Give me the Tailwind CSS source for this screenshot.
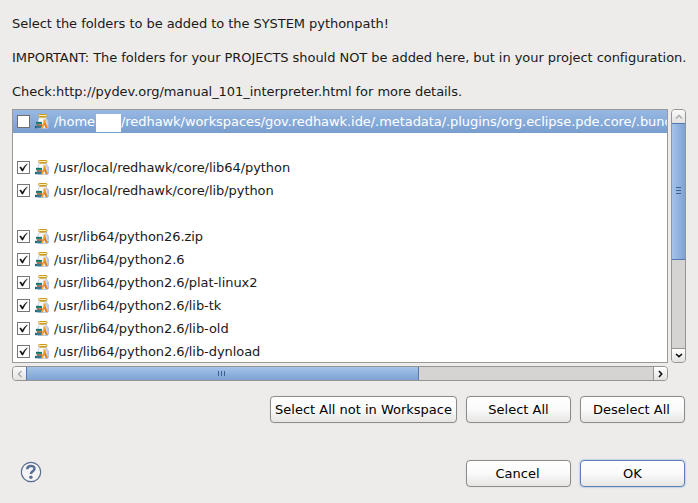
<!DOCTYPE html>
<html lang="en">
<head>
<meta charset="utf-8">
<title>Selection needed</title>
<script src="https://cdn.jsdelivr.net/npm/@tailwindcss/browser@4"></script>
</head>
<body class="w-[698px] h-[503px] overflow-hidden bg-[#edeceb] font-['DejaVu_Sans',sans-serif] text-[13px] leading-[17px] text-[#1a1a1a]">
<svg width="0" height="0" class="absolute">
  <defs>
    <linearGradient id="glass" x1="0" x2="1"><stop offset="0" stop-color="#ffffff"/><stop offset=".6" stop-color="#eef4fb"/><stop offset="1" stop-color="#a9c0e0"/></linearGradient>
    <symbol id="jar" viewBox="0 0 14 15">
      <path d="M4.500 3h7v1.700L13.500 7v6.500l-1 1H3V7z" fill="url(#glass)" stroke="#a3b9da" stroke-width=".7"/>
      <rect x="3.500" y=".5" width="8.500" height="2" rx=".8" fill="#fbeebc" stroke="#cc9c22" stroke-width="1"/>
      <path d="M5 3.600h5.500" stroke="#d9b04a" stroke-width=".9"/>
      <path d="M1 8h6v2.300H1z" fill="#1f8a72"/><path d="M1 8.300h5.500" stroke="#155e6c" stroke-width=".7"/>
      <path d="M2 10.300h5.500v1.500H2z" fill="#b9512f"/>
      <path d="M0 11.800h7v2.400H0z" fill="#1d6080"/><path d="M1.500 13h5" stroke="#6fae9f" stroke-width=".7"/>
      <path d="M8.500 5.500h2l.3 2.500-3 6.300H5.800L8.300 8.500z" fill="#f2a02c"/>
      <path d="M10.300 8l2.500 6h-2L9 10.500z" fill="#dd7d1c"/>
    </symbol>
    <symbol id="box" viewBox="0 0 13 13"><rect x=".5" y=".5" width="12" height="12" fill="#fff" stroke="#6f6e6c"/></symbol>
    <symbol id="checked" viewBox="0 0 13 13"><rect x=".5" y=".5" width="12" height="12" fill="#fff" stroke="#777674"/><path d="M2.500 6.200L4 5.700l1.400 2.300Q7.300 4.500 10.200 2.700l.3.400Q7.800 6 5.900 10.200H5z" fill="#111" stroke="#111" stroke-width=".2"/></symbol>
  </defs>
</svg>
<main class="flex h-full flex-col pl-3 pr-3">
  <div class="flex h-[109px] flex-col gap-[17px] pt-[15px] whitespace-nowrap tracking-[-0.05px]">
    <p>Select the folders to be added to the SYSTEM pythonpath!</p>
    <p>IMPORTANT: The folders for your PROJECTS should NOT be added here, but in your project configuration.</p>
    <p>Check:http://pydev.org/manual_101_interpreter.html for more details.</p>
  </div>
  <div class="flex h-[254px] shrink-0 gap-[3px]">
    <div class="h-[254px] w-[656px] overflow-hidden border border-[#9b9996] bg-white whitespace-nowrap tracking-[-0.06px]">
      <div class="flex h-[23px] items-center bg-linear-to-b from-[#98b8e3] to-[#789ecf] pl-1 text-white">
        <svg class="size-[13px] shrink-0"><use href="#box"/></svg><svg class="ml-[5px] h-[15px] w-[14px] shrink-0"><use href="#jar"/></svg><span class="ml-[5px] w-[42px] shrink-0">/home</span><span class="mt-[3px] h-[18px] w-[25px] shrink-0 bg-white"></span><span>/redhawk/workspaces/gov.redhawk.ide/.metadata/.plugins/org.eclipse.pde.core/.bund</span>
      </div>
      <div class="h-[23px]"></div>
      <div class="flex h-[23px] items-center pl-1"><svg class="size-[13px]"><use href="#checked"/></svg><svg class="ml-[5px] h-[15px] w-[14px]"><use href="#jar"/></svg><span class="ml-[5px]">/usr/local/redhawk/core/lib64/python</span></div>
      <div class="flex h-[23px] items-center pl-1"><svg class="size-[13px]"><use href="#checked"/></svg><svg class="ml-[5px] h-[15px] w-[14px]"><use href="#jar"/></svg><span class="ml-[5px]">/usr/local/redhawk/core/lib/python</span></div>
      <div class="h-[23px]"></div>
      <div class="flex h-[23px] items-center pl-1"><svg class="size-[13px]"><use href="#checked"/></svg><svg class="ml-[5px] h-[15px] w-[14px]"><use href="#jar"/></svg><span class="ml-[5px]">/usr/lib64/python26.zip</span></div>
      <div class="flex h-[23px] items-center pl-1"><svg class="size-[13px]"><use href="#checked"/></svg><svg class="ml-[5px] h-[15px] w-[14px]"><use href="#jar"/></svg><span class="ml-[5px]">/usr/lib64/python2.6</span></div>
      <div class="flex h-[23px] items-center pl-1"><svg class="size-[13px]"><use href="#checked"/></svg><svg class="ml-[5px] h-[15px] w-[14px]"><use href="#jar"/></svg><span class="ml-[5px]">/usr/lib64/python2.6/plat-linux2</span></div>
      <div class="flex h-[23px] items-center pl-1"><svg class="size-[13px]"><use href="#checked"/></svg><svg class="ml-[5px] h-[15px] w-[14px]"><use href="#jar"/></svg><span class="ml-[5px]">/usr/lib64/python2.6/lib-tk</span></div>
      <div class="flex h-[23px] items-center pl-1"><svg class="size-[13px]"><use href="#checked"/></svg><svg class="ml-[5px] h-[15px] w-[14px]"><use href="#jar"/></svg><span class="ml-[5px]">/usr/lib64/python2.6/lib-old</span></div>
      <div class="flex h-[23px] items-center pl-1"><svg class="size-[13px]"><use href="#checked"/></svg><svg class="ml-[5px] h-[15px] w-[14px]"><use href="#jar"/></svg><span class="ml-[5px]">/usr/lib64/python2.6/lib-dynload</span></div>
    </div>
    <div class="flex h-[254px] w-[15px] shrink-0 flex-col overflow-hidden rounded-[4px] border border-[#979593] bg-[#d5d4d2]">
      <div class="flex h-[13px] shrink-0 items-center justify-center bg-linear-to-b from-[#fafafa] to-[#e3e2e1]"><svg class="h-[5px] w-[8px]" viewBox="0 0 8 5"><path d="M1 4.500L4 1.500l3 3" fill="none" stroke="#aaa8a6" stroke-width="1.400"/></svg></div>
      <div class="-mx-px flex h-[137px] shrink-0 flex-col items-center justify-center gap-[2px] border border-[#5479ad] bg-linear-to-r from-[#a5c3ea] to-[#7da2d4] pb-[3px]"><i class="h-px w-[5px] bg-[#3c5f92]"></i><i class="h-px w-[5px] bg-[#3c5f92]"></i><i class="h-px w-[5px] bg-[#3c5f92]"></i></div>
      <div class="flex-1"></div>
      <div class="flex h-[14px] shrink-0 items-center justify-center border-t border-[#979593] bg-linear-to-b from-white to-[#e3e2e1]"><svg class="h-[5px] w-[8px]" viewBox="0 0 8 5"><path d="M1 1l3 2.700L7 1" fill="none" stroke="#111" stroke-width="1.600"/></svg></div>
    </div>
  </div>
  <div class="mt-[3px] flex h-[15px] w-[656px] shrink-0 overflow-hidden rounded-[4px] border border-[#979593] bg-[#d5d4d2]">
    <div class="flex w-[13px] shrink-0 items-center justify-center bg-linear-to-b from-[#fafafa] to-[#e3e2e1]"><svg class="h-[8px] w-[5px]" viewBox="0 0 5 8"><path d="M4.500 1L1.500 4l3 3" fill="none" stroke="#aaa8a6" stroke-width="1.400"/></svg></div>
    <div class="-my-px flex w-[393px] shrink-0 items-center justify-center gap-[2px] border border-[#5479ad] bg-linear-to-b from-[#a5c3ea] to-[#7da2d4] pr-[2px]"><i class="h-[5px] w-px bg-[#3c5f92]"></i><i class="h-[5px] w-px bg-[#3c5f92]"></i><i class="h-[5px] w-px bg-[#3c5f92]"></i></div>
    <div class="flex-1"></div>
    <div class="flex w-[14px] shrink-0 items-center justify-center border-l border-[#979593] bg-linear-to-b from-white to-[#e3e2e1]"><svg class="h-[8px] w-[5px]" viewBox="0 0 5 8"><path d="M1 1l2.700 3L1 7" fill="none" stroke="#111" stroke-width="1.600"/></svg></div>
  </div>
  <div class="mt-[15px] flex shrink-0 justify-end gap-[9px] pr-px text-black">
    <button class="h-[27px] w-[187px] rounded-[4px] border border-[#8e8c8a] bg-linear-to-b from-white via-[#fafafa] to-[#e6e5e4] whitespace-nowrap shadow-[0_0_1px_#0003]">Select All not in Workspace</button>
    <button class="h-[27px] w-[105px] rounded-[4px] border border-[#8e8c8a] bg-linear-to-b from-white via-[#fafafa] to-[#e6e5e4] shadow-[0_0_1px_#0003]">Select All</button>
    <button class="h-[27px] w-[105px] rounded-[4px] border border-[#8e8c8a] bg-linear-to-b from-white via-[#fafafa] to-[#e6e5e4] pr-[2px] shadow-[0_0_1px_#0003]">Deselect All</button>
  </div>
  <div class="mt-[37px] flex shrink-0 items-center gap-[9px] pl-2 pr-px text-black">
    <svg class="mr-auto size-[22px] -mt-[4px]" viewBox="0 0 22 22"><circle cx="11" cy="11" r="9.700" fill="#f4f4f5" stroke="#566b8f" stroke-width="1.200"/><path d="M7.200 8.200C7.400 3.800 14.500 4 14.500 7.700c0 2.500-3.600 2.600-3.600 5.300" fill="none" stroke="#5a6f94" stroke-width="2.500"/><circle cx="10.900" cy="16.300" r="1.700" fill="#5a6f94"/></svg>
    <button class="h-[27px] w-[105px] rounded-[4px] border border-[#8e8c8a] bg-linear-to-b from-white via-[#fafafa] to-[#e6e5e4] pr-[2px] shadow-[0_0_1px_#0003]">Cancel</button>
    <button class="h-[27px] w-[105px] rounded-[4px] border border-[#5b80b5] bg-linear-to-b from-white via-[#fafafa] to-[#e6e5e4] shadow-[0_0_2px_#6f9ad8]">OK</button>
  </div>
</main>
</body>
</html>
